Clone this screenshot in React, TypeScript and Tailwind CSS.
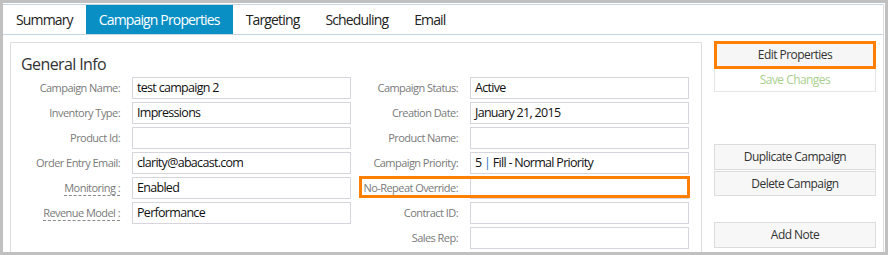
import React from "react";

const font = { fontFamily: '"Open Sans", "Noto Sans", sans-serif' };

type Row = { label: string; value: React.ReactNode; dashed?: boolean };

const leftRows: Row[] = [
  { label: "Campaign Name:", value: "test campaign 2" },
  { label: "Inventory Type:", value: "Impressions" },
  { label: "Product Id:", value: "" },
  { label: "Order Entry Email:", value: "clarity@abacast.com" },
  { label: "Monitoring :", value: "Enabled", dashed: true },
  { label: "Revenue Model :", value: "Performance", dashed: true },
];

const rightRows: Row[] = [
  { label: "Campaign Status:", value: "Active" },
  { label: "Creation Date:", value: "January 21, 2015" },
  { label: "Product Name:", value: "" },
  {
    label: "Campaign Priority:",
    value: (
      <span>
        5 <span className="text-[#2a7ac0]">|</span> Fill - Normal Priority
      </span>
    ),
  },
  { label: "No-Repeat Override:", value: "" },
  { label: "Contract ID:", value: "" },
  { label: "Sales Rep:", value: "" },
  { label: "", value: "" },
];

function Field({ row, labelW }: { row: Row; labelW: string }) {
  return (
    <div className="flex h-[22px] items-center">
      <div className={`${labelW} shrink-0 flex justify-end`}>
        <span
          className={`whitespace-nowrap text-[11px] tracking-[-0.55px] leading-[14px] text-[#7a7a7a] ${
            row.dashed ? "border-b border-dashed border-[#8a8a8a]" : ""
          }`}
        >
          {row.label}
        </span>
      </div>
      <div className="ml-[12px] w-[219px] h-[22px] border border-[#d6d4dc] bg-white px-[4px] flex items-center whitespace-nowrap text-[12.5px] tracking-[-0.7px] text-[#111]">
        {row.value}
      </div>
    </div>
  );
}

export default function App() {
  const tabs = ["Summary", "Campaign Properties", "Targeting", "Scheduling", "Email"];
  return (
    <div className="w-[888px] h-[255px] bg-[#c0c0c0] p-[3px] overflow-hidden" style={font}>
      <div className="w-[882px] h-[249px] bg-white pt-px overflow-hidden">
        <div className="h-full border-r border-[#dcdcdc] mr-[1px] overflow-hidden">
          {/* Tabs */}
          <div className="flex h-[31px] border-t border-b border-[#c6d5e2]">
            {tabs.map((t) => (
              <div
                key={t}
                className={`px-[13px] flex items-center text-[14px] tracking-[-0.85px] ${
                  t === "Campaign Properties" ? "bg-[#0a8fc5] text-white" : "text-[#222]"
                }`}
              >
                {t}
              </div>
            ))}
          </div>

          <div className="flex pl-[7px]">
            {/* Left panel */}
            <div className="relative mt-[7px] w-[692px] h-[230px] border border-[#dedede] pt-[10px]">
              <div className="pl-[10px] text-[16px] tracking-[-0.6px] leading-[22px] text-[#333]">General Info</div>
              <div className="flex mt-[2px]">
                <div className="flex flex-col gap-[3px]">
                  {leftRows.map((r) => (
                    <Field key={r.label} row={r} labelW="w-[109px]" />
                  ))}
                </div>
                <div className="ml-[10px] flex flex-col gap-[3px]">
                  {rightRows.map((r, i) => (
                    <Field key={i} row={r} labelW="w-[97px]" />
                  ))}
                </div>
              </div>
              {/* highlight overlay */}
              <div className="absolute left-[348px] top-[133px] w-[331px] h-[22px] border-[3px] border-[#ff8000]" />
            </div>

            {/* Right buttons */}
            <div className="ml-[12px] mt-[6px] w-[162px] flex flex-col text-[12px] tracking-[-0.55px]">
              <div className="h-[28px] border-[3px] border-[#ff8000] bg-[#f6f6f6] flex items-center justify-center text-[#333]">
                Edit Properties
              </div>
              <div className="h-[23px] border border-t-0 border-[#e6e6e6] bg-white flex items-center justify-center text-[#a9d08e]">
                Save Changes
              </div>
              <div className="mt-[52px] h-[26px] border border-[#dcdcdc] bg-[#f7f7f7] flex items-center justify-center text-[#333]">
                Duplicate Campaign
              </div>
              <div className="mt-[1px] h-[25px] border border-[#dcdcdc] bg-[#f7f7f7] flex items-center justify-center text-[#333]">
                Delete Campaign
              </div>
              <div className="mt-[26px] h-[26px] border border-[#dcdcdc] bg-[#f7f7f7] flex items-center justify-center text-[#333]">
                Add Note
              </div>
            </div>
          </div>
        </div>
      </div>
    </div>
  );
}
